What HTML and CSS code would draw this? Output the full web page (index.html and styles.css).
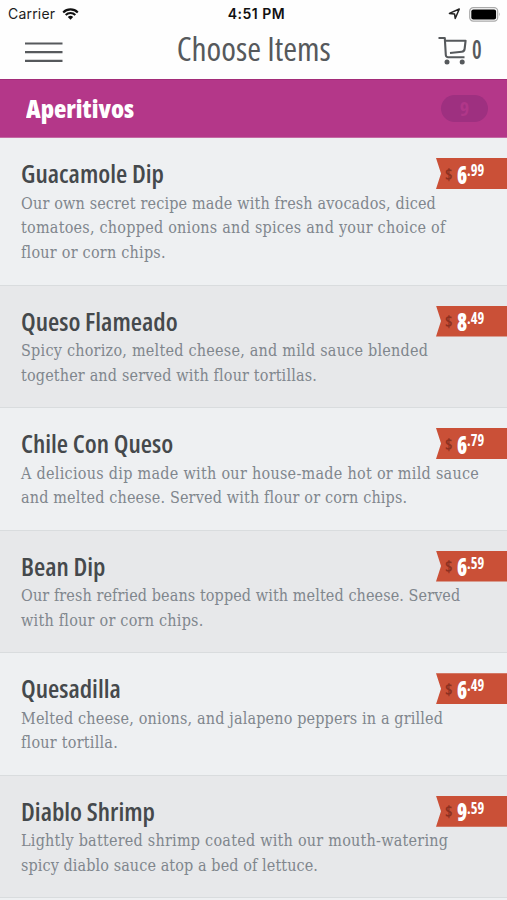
FILE: index.html
```
<!DOCTYPE html>
<html lang="en">
<head>
<meta charset="utf-8">
<title>Choose Items</title>
<link rel="stylesheet" href="styles.css">
</head>
<body>
<header class="top">
  <div class="status">
    <div class="status-left"><span>Carrier</span>
      <svg class="wifi" viewBox="0 0 17 12"><path d="M1.2 4.4a10.4 10.4 0 0 1 14.6 0M3.7 7a6.8 6.8 0 0 1 9.6 0" fill="none" stroke="#111" stroke-width="2.1"/><path d="M5.8 9.1a3.8 3.8 0 0 1 5.4 0L8.5 11.8z" fill="#111"/></svg>
    </div>
    <div class="clock">4:51 PM</div>
    <div class="status-right">
      <svg class="arrow" viewBox="0 0 13 12"><path d="M11.3 1L7.2 10.5 6.6 6.1 1.4 5.4z" fill="none" stroke="#222" stroke-width="1.5" stroke-linejoin="round"/></svg>
      <svg class="battery" viewBox="0 0 32 15"><rect x=".7" y=".7" width="28" height="13.4" rx="3.6" fill="#fff" stroke="#aaa" stroke-width="1.2"/><rect x="2.3" y="2.4" width="24.8" height="10" rx="2" fill="#000"/><path d="M30 5.2q1.6 2.2 0 4.4z" fill="#999"/></svg>
    </div>
  </div>
  <nav class="bar">
    <svg class="menu" viewBox="0 0 38 22"><path d="M0 2.5h37.5M0 11.2h37.5M0 19.9h37.5" stroke="#56595c" stroke-width="2.2"/></svg>
    <h1>Choose Items</h1>
    <div class="cart">
      <svg viewBox="0 0 30 29"><g fill="none" stroke="#56595c" stroke-width="2.1" stroke-linejoin="round"><path d="M.5 2h6.3l1 17q.2 2.2 2.4 2.2H26.5"/><path d="M7.2 4.7h20.4l-1 8.3q-.3 2.5-2.8 2.7L12 17"/></g><circle cx="9" cy="26" r="2.5" fill="#56595c"/><circle cx="24.2" cy="26" r="2.5" fill="#56595c"/></svg>
      <span>0</span>
    </div>
  </nav>
</header>
<section class="category"><h2>Aperitivos</h2><span class="count">9</span></section>
<main>
  <article class="item"><h3>Guacamole Dip</h3><p><span>Our own secret recipe made with fresh avocados, diced</span> <span class="wide">tomatoes, chopped onions and spices and your choice of</span> <span class="wide">flour or corn chips.</span></p><div class="price"><i>$</i><b>6</b><sup>.99</sup></div></article>
  <article class="item"><h3>Queso Flameado</h3><p><span class="wide">Spicy chorizo, melted cheese, and mild sauce blended</span> <span>together and served with flour tortillas.</span></p><div class="price"><i>$</i><b>8</b><sup>.49</sup></div></article>
  <article class="item"><h3>Chile Con Queso</h3><p><span class="wider">A delicious dip made with our house-made hot or mild sauce</span> <span>and melted cheese. Served with flour or corn chips.</span></p><div class="price"><i>$</i><b>6</b><sup>.79</sup></div></article>
  <article class="item"><h3>Bean Dip</h3><p><span class="tight">Our fresh refried beans topped with melted cheese. Served</span> <span class="wide">with flour or corn chips.</span></p><div class="price"><i>$</i><b>6</b><sup>.59</sup></div></article>
  <article class="item"><h3>Quesadilla</h3><p><span>Melted cheese, onions, and jalapeno peppers in a grilled</span> <span class="wide">flour tortilla.</span></p><div class="price"><i>$</i><b>6</b><sup>.49</sup></div></article>
  <article class="item"><h3>Diablo Shrimp</h3><p><span class="wide">Lightly battered shrimp coated with our mouth-watering</span> <span class="tight">spicy diablo sauce atop a bed of lettuce.</span></p><div class="price"><i>$</i><b>9</b><sup>.59</sup></div></article>
</main>
</body>
</html>
```
FILE: styles.css
```
* { box-sizing: border-box; margin: 0; padding: 0; }
body { width: 507px; height: 900px; overflow: hidden; background: #eef0f2; font-family: "Open Sans", sans-serif; font-stretch: 75%; }
svg { display: block; }
.top { height: 79px; background: #fefefe; }
.status { display: grid; grid-template-columns: 1fr auto 1fr; height: 28px; padding: 0 6px 0 8px; align-items: center; font: 14px/28px Inter, sans-serif; color: #1c1c1c; }
.status-left, .status-right { display: flex; align-items: center; gap: 8px; }
.status-left { gap: 7px; letter-spacing: .2px; }
.status-right { justify-content: flex-end; }
.clock { padding-left: 4px; font-weight: 600; letter-spacing: .5px; color: #111; }
.wifi { width: 17px; height: 12px; }
.arrow { width: 13px; height: 12px; }
.battery { width: 32px; height: 15px; }
.bar { display: grid; grid-template-columns: 1fr auto 1fr; height: 43px; padding: 0 25px; align-items: center; color: #56595c; }
.menu { width: 38px; height: 22px; margin-top: 5px; }
h1 { margin-top: -3px; font-size: 32px; font-weight: 400; line-height: 43px; white-space: nowrap; transform: scaleX(1.045); }
.cart { display: flex; justify-content: flex-end; align-items: center; gap: 4px; font-size: 27px; font-weight: 600; line-height: 39px; }
.cart svg { width: 30px; height: 29px; margin-top: 1px; }
.cart span { width: 10px; margin-top: -2px; transform: scaleX(.8); transform-origin: 0 0; }
.category { display: flex; justify-content: space-between; align-items: center; height: 59px; padding: 0 19px 0 26px; background: #b43789; border-top: 1px solid #a32c79; border-bottom: 1px solid #c469a4; color: #fff; }
h2 { margin-top: -1px; font-size: 25px; font-weight: 800; transform: scaleX(1.02); transform-origin: 0 0; }
.count { width: 47px; height: 27px; border-radius: 14px; background: #9e3080; color: #b03789; font-size: 20px; font-weight: 700; line-height: 27px; text-align: center; }
.item { position: relative; height: 122.55px; padding: 20px 0 0 21px; border-bottom: 1px solid #d9dcde; background: #eef0f2; }
.item:first-child { height: 147.5px; }
.item:nth-child(even) { background: #e7e8ea; }
h3 { width: max-content; font-size: 25px; font-weight: 600; line-height: 30px; color: #45494c; white-space: nowrap; transform: scaleX(1.033); transform-origin: 0 0; }
.item p { padding-top: 3.5px; font-family: "DejaVu Serif", serif; font-stretch: 75%; font-size: 16px; letter-spacing: .16px; line-height: 24.8px; color: #80868d; white-space: nowrap; }
.item p span { display: block; }
.item p .wide { letter-spacing: .24px; }
.item p .wider { letter-spacing: .28px; }
.item p .tight { letter-spacing: .1px; }
.price { position: absolute; right: 0; top: 20px; width: 71px; height: 31px; padding-left: 9px; display: flex; align-items: center; background: #ca5037; color: #fff; clip-path: polygon(0 0, 100% 0, 100% 100%, 0 100%, 5px 50%); line-height: 30px; font-weight: 700; }
.price i { width: 12px; font-style: normal; font-size: 16px; color: #8d3121; }
.price b { width: 10px; font-size: 25px; transform: scaleX(.82); transform-origin: 0 50%; }
.price sup { font-size: 16.5px; line-height: 16px; margin-bottom: 7px; vertical-align: baseline; transform: scaleX(.87); transform-origin: 0 50%; }
```
